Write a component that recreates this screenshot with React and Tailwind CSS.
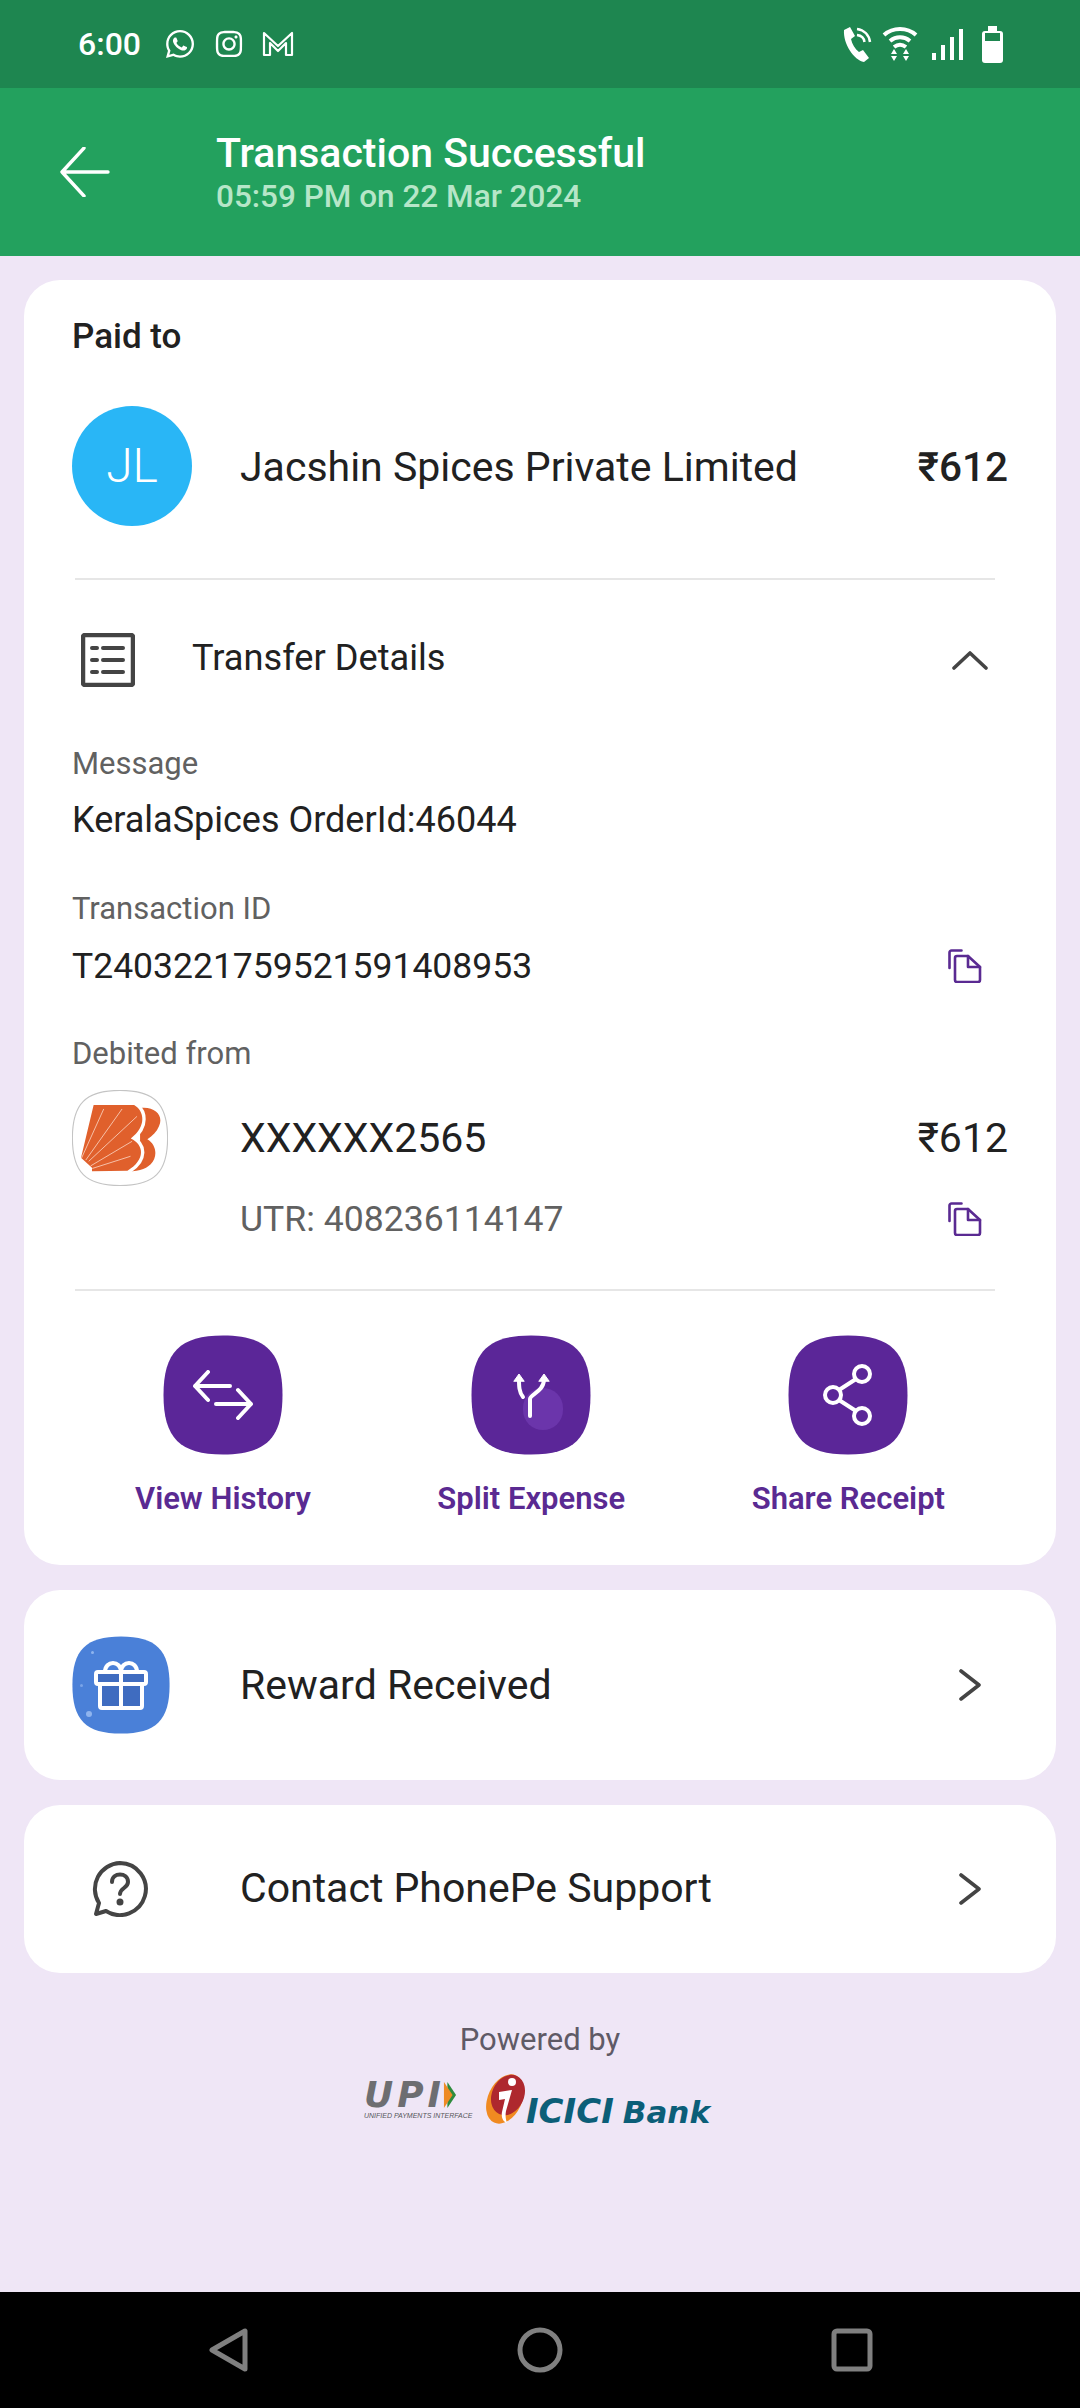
import React from 'react';
import { FaWhatsapp, FaInstagram } from 'react-icons/fa';

const CopyIcon = () => (
  <svg viewBox="0 0 34 34" className="w-[34px] h-[34px]" fill="none" stroke="#5a2a92" strokeWidth="2.6" strokeLinejoin="round" strokeLinecap="round">
    <path d="M13.5 1.5H3.5a2 2 0 0 0-2 2V19" />
    <path d="M7 9a2 2 0 0 1 2-2h11l12 11v13a2 2 0 0 1-2 2H9a2 2 0 0 1-2-2z" />
    <path d="M20 7v11h12" />
  </svg>
);

const ChevronRight = () => (
  <svg viewBox="0 0 24 32" className="w-[24px] h-[32px]" fill="none" stroke="#444" strokeWidth="3.6" strokeLinecap="round" strokeLinejoin="round">
    <path d="M3 2l18 14L3 30" />
  </svg>
);

// tile shape behind the app style icons
const Squircle = ({ className, fill, stroke }) => (
  <svg viewBox="0 0 120 120" className={className}>
    <path d="M60 .5C103 .5 119.500 17 119.500 60S103 119.500 60 119.500 .5 103 .5 60 17 .5 60 .5z" fill={fill} stroke={stroke} strokeWidth="1.4" />
  </svg>
);

const StatusBar = () => (
  <div className="h-[88px] bg-[#1e8650] flex items-center justify-between pl-[78px] pr-[77px] text-white">
    <div className="flex items-center">
      <span className="text-[32px] font-medium leading-none w-[86px]">6:00</span>
      <FaWhatsapp className="w-[32px] h-[32px]" />
      <FaInstagram className="w-[30px] h-[30px] ml-[18px]" />
      <svg viewBox="0 0 32 26" className="w-[32px] h-[26px] ml-[18px]" fill="none" stroke="white" strokeWidth="2.200" strokeLinejoin="round">
        <path d="M2 24V2l14 13L30 2v22h-6V12l-8 8-8-8v12z" />
      </svg>
    </div>
    <div className="flex items-center">
      <svg viewBox="0 0 30 36" className="w-[30px] h-[36px]" fill="white">
        <path d="M2 4l6-3 5 9-4 3c1 5 4 10 8 13l4-2 6 8-5 4C12 34 1 18 2 4z" />
        <path d="M15 3c7 1 12 6 13 13M15 9c4 .5 7 3 7.500 7" fill="none" stroke="white" strokeWidth="2.500" />
      </svg>
      <svg viewBox="0 0 36 36" className="w-[36px] h-[36px] ml-[10px]" fill="none" stroke="white" strokeWidth="4" strokeLinecap="butt">
        <path d="M2 9c9-8 23-8 32 0M8 15c6-5 14-5 20 0M12 21c4-3 8-3 12 0" />
        <path d="M9 28h6l-3-5zM21 28h6l-3-5zM9 30h6l-3 5zM21 30h6l-3 5z" fill="white" stroke="none" />
      </svg>
      <svg viewBox="0 0 32 32" className="w-[32px] h-[32px] ml-[14px]" fill="white">
        <rect x="0" y="25" width="4" height="7" />
        <rect x="9" y="17" width="4" height="15" />
        <rect x="18" y="9" width="4" height="23" />
        <rect x="27" y="1" width="4" height="31" />
      </svg>
      <div className="ml-[18px] w-[21px] h-[32px] mt-[5px] bg-white rounded-[3px] relative">
        <div className="absolute -top-[5px] left-[6px] w-[9px] h-[5px] bg-white" />
        <div className="absolute top-[2px] left-[3px] w-[15px] h-[8px] bg-[#1e8650]" />
      </div>
    </div>
  </div>
);

const Header = () => (
  <div className="h-[168px] bg-[#23a15e] flex items-center pl-[60px]">
    <svg viewBox="0 0 50 50" className="w-[50px] h-[50px]" fill="none" stroke="white" strokeWidth="3.400" strokeLinecap="round" strokeLinejoin="round">
      <path d="M48 25H2M24 1L2 25l22 24" />
    </svg>
    <div className="ml-[106px]">
      <div className="text-[41px] leading-[48px] font-medium text-white pt-[2px]">Transaction Successful</div>
      <div className="text-[31.5px] leading-[40px] font-medium text-[#b6e6c8]">05:59 PM on 22 Mar 2024</div>
    </div>
  </div>
);

const BarodaLogo = () => (
  <div className="w-[96px] h-[96px] relative">
    <Squircle className="w-[96px] h-[96px]" fill="white" stroke="#c4c4c4" />
    <svg viewBox="120 130 245 205" className="absolute left-[8px] top-[14px] w-[82px] h-[68px]">
      <path d="M300 142C345 136 372 165 357 197 350 214 338 226 322 236 350 252 354 290 332 312 316 328 290 334 250 334L250 300 300 240 300 180z" fill="#e0602c" />
      <path d="M160 133H282C312 150 322 196 272 234 312 252 318 298 262 331L155 333 155 322 122 292z" fill="#e0602c" stroke="white" strokeWidth="20" strokeLinejoin="round" paintOrder="stroke" />
      <g stroke="#fde4d6" strokeWidth="2.200" strokeLinecap="round">
        <path d="M124 292L190 146M137 298L245 146M146 302L290 168M152 316L275 243M157 324L270 288" />
      </g>
    </svg>
  </div>
);

const Label = ({ children }) => <div className="h-[40px] text-[31px] leading-[40px] text-[#616161] pt-[1px]">{children}</div>;

const ActionButton = ({ label, children }) => (
  <div className="flex flex-col items-center">
    <div className="w-[120px] h-[120px] flex items-center justify-center relative">
      <Squircle className="absolute inset-0 w-[120px] h-[120px]" fill="#5b2698" />
      {children}
    </div>
    <div className="mt-[24px] text-[31px] leading-[40px] font-semibold text-[#5a2a92] whitespace-nowrap">{label}</div>
  </div>
);

const MainCard = () => (
  <div className="bg-white rounded-[36px] pt-[37px] h-[1285px] text-[#212121]">
    <div className="px-[48px] h-[40px] text-[35px] leading-[40px] font-medium">Paid to</div>
    <div className="mt-[49px] px-[48px] flex items-center h-[120px]">
      <div className="w-[120px] h-[120px] rounded-full bg-[#29b6f6] flex items-center justify-center text-white text-[48px] font-light">JL</div>
      <div className="ml-[48px] flex-1 text-[41px] pt-[3px]">Jacshin Spices Private Limited</div>
      <div className="text-[40.5px] font-medium pt-[3px]">₹612</div>
    </div>
    <div className="mt-[52px] ml-[51px] mr-[61px] h-[2px] bg-[#e6e6e6]" />
    <div className="mt-[38px] h-[80px] flex items-center pl-[57px] pr-[68px]">
      <svg viewBox="0 0 54 54" className="w-[54px] h-[54px] mt-[4px]" fill="none" stroke="#444" strokeWidth="4.500" strokeLinejoin="round">
        <rect x="2" y="2" width="50" height="50" rx="2" />
        <path d="M11 15h5M11 27h5M11 39h5M22 15h20M22 27h20M22 39h20" strokeWidth="4" strokeLinecap="round" />
      </svg>
      <div className="ml-[57px] flex-1 text-[36.2px]">Transfer Details</div>
      <svg viewBox="0 0 36 20" className="w-[36px] h-[20px] mt-[4px]" fill="none" stroke="#444" strokeWidth="3.600" strokeLinecap="round" strokeLinejoin="round">
        <path d="M2 18L18 3l16 15" />
      </svg>
    </div>
    <div className="px-[48px]">
      <div className="mt-[45px]"><Label>Message</Label></div>
      <div className="mt-[17px] h-[40px] text-[36px] leading-[40px]">KeralaSpices OrderId:46044</div>
      <div className="mt-[48px]"><Label>Transaction ID</Label></div>
      <div className="mt-[18px] h-[40px] flex items-center justify-between">
        <span className="text-[35.5px] leading-[40px]">T2403221759521591408953</span>
        <span className="mr-[26px]"><CopyIcon /></span>
      </div>
      <div className="mt-[47px]"><Label>Debited from</Label></div>
      <div className="mt-[17px] flex">
        <div className="w-[168px] shrink-0"><BarodaLogo /></div>
        <div className="flex-1">
          <div className="h-[96px] flex items-center justify-between text-[41px] pt-[1px]">
            <span>XXXXXX2565</span>
            <span>₹612</span>
          </div>
          <div className="mt-[13px] h-[40px] flex items-center justify-between">
            <span className="text-[35.6px] leading-[40px] text-[#616161]">UTR: 408236114147</span>
            <span className="mr-[26px]"><CopyIcon /></span>
          </div>
        </div>
      </div>
    </div>
    <div className="mt-[50px] ml-[51px] mr-[61px] h-[2px] bg-[#e6e6e6]" />
    <div className="mt-[44px] px-[111px] flex justify-between">
      <ActionButton label="View History">
        <svg viewBox="0 0 62 50" className="w-[62px] h-[50px] relative" fill="none" stroke="white" strokeWidth="4" strokeLinecap="round" strokeLinejoin="round">
          <path d="M38 16H3M16 2L3 16l13 14" />
          <path d="M24 34h35M46 20l13 14-13 14" />
        </svg>
      </ActionButton>
      <ActionButton label="Split Expense">
        <div className="absolute left-[52px] top-[53px] w-[40px] h-[42px] rounded-full bg-[#6b35ab]" />
        <svg viewBox="0 0 40 46" className="w-[40px] h-[46px] relative" fill="none" stroke="white" strokeWidth="4" strokeLinecap="round" strokeLinejoin="round">
          <path d="M19 44V27c0-5 14-7 14-20" />
          <path d="M12 25C8 20 8 14 8 7" />
          <path d="M3 9l5-7 5 7zM28 9l5-7 5 7z" fill="white" strokeWidth="1" />
        </svg>
      </ActionButton>
      <ActionButton label="Share Receipt">
        <svg viewBox="0 0 50 62" className="w-[50px] h-[62px] relative" fill="none" stroke="white" strokeWidth="4">
          <circle cx="39" cy="10" r="8" />
          <circle cx="10" cy="31" r="8" />
          <circle cx="39" cy="52" r="8" />
          <path d="M33 15L16 26M16 36l17 11" />
        </svg>
      </ActionButton>
    </div>
  </div>
);

const RewardCard = () => (
  <div className="mt-[25px] h-[190px] bg-white rounded-[36px] flex items-center pl-[48px] pr-[74px]">
    <div className="w-[98px] h-[98px] flex items-center justify-center relative">
      <Squircle className="absolute inset-0 w-[98px] h-[98px]" fill="#4a80d8" />
      <div className="absolute left-[19px] top-[15px] w-[3px] h-[3px] rounded-full bg-[#8fb4ee]" />
      <div className="absolute left-[8px] top-[48px] w-[3px] h-[3px] rounded-full bg-[#7aa4e8]" />
      <div className="absolute left-[14px] top-[75px] w-[6px] h-[6px] rounded-full bg-[#8fb4ee]" />
      <svg viewBox="0 0 54 50" className="w-[54px] h-[50px] relative" fill="none" stroke="white" strokeWidth="4" strokeLinejoin="round">
        <path d="M6 24h42v22a2 2 0 0 1-2 2H8a2 2 0 0 1-2-2z" fill="#3f6cc0" />
        <rect x="2" y="12" width="50" height="12" rx="2" fill="#3f6cc0" />
        <path d="M27 12v36" />
        <path d="M11 12c0-12 16-12 16 0M27 12c0-12 16-12 16 0" />
      </svg>
    </div>
    <div className="ml-[70px] flex-1 text-[41px] text-[#212121] pt-[1px]">Reward Received</div>
    <ChevronRight />
  </div>
);

const SupportCard = () => (
  <div className="mt-[25px] h-[168px] bg-white rounded-[36px] flex items-center pl-[68px] pr-[74px]">
    <svg viewBox="0 0 56 56" className="w-[56px] h-[56px]" fill="none" stroke="#444" strokeWidth="4" strokeLinecap="round" strokeLinejoin="round">
      <path d="M28 2a26 26 0 1 1-14 48L4 53l3-11A26 26 0 0 1 28 2z" />
      <path d="M20 21c0-10 16-10 16 0 0 6-8 6-8 12" />
      <circle cx="28" cy="41" r="1.500" fill="#444" />
    </svg>
    <div className="ml-[92px] flex-1 text-[41px] text-[#212121]">Contact PhonePe Support</div>
    <ChevronRight />
  </div>
);

const Footer = () => (
  <div className="mt-[47px] flex flex-col items-center">
    <div className="h-[40px] text-[31px] leading-[40px] text-[#5f5a66]">Powered by</div>
    <div className="mt-[13px] h-[52px] flex items-end ml-[-6px]">
      <div className="flex flex-col items-start w-[106px] mb-[3px]">
        <div className="flex items-center h-[26px]">
          <span className="font-['DejaVu_Sans',sans-serif] italic font-bold text-[36px] leading-[26px] text-[#6d6e71] tracking-[4px]">UPI</span>
          <svg viewBox="0 0 14 30" className="w-[14px] h-[26px] ml-[-2px]">
            <path d="M4 0l10 15L4 30z" fill="#2e8b3d" />
            <path d="M0 0l10 15L0 30z" fill="#ee8a25" />
          </svg>
        </div>
        <div className="mt-[2px] font-['Liberation_Sans',sans-serif] italic text-[7px] leading-[12px] text-[#55565a] whitespace-nowrap">UNIFIED PAYMENTS INTERFACE</div>
      </div>
      <svg viewBox="0 0 46 50" className="w-[46px] h-[50px] ml-[12px] mb-[1px]">
        <ellipse cx="23" cy="25" rx="17" ry="26" transform="rotate(25 23 25)" fill="#f08a21" />
        <ellipse cx="26" cy="21" rx="16" ry="21" transform="rotate(25 26 21)" fill="#ae282e" />
        <circle cx="30" cy="8" r="4" fill="white" />
        <path d="M17 18l13-2-6 21c-1 5 0 9 1 12-4-1-6-6-5-11l3-13-6 1z" fill="white" />
      </svg>
      <div className="font-['DejaVu_Sans',sans-serif] italic font-bold text-[#0b5e78] mb-[-4px] ml-[-2px] whitespace-nowrap flex items-baseline">
        <span className="text-[34px] leading-[34px]">ICICI</span><span className="text-[31px] leading-[34px] ml-[9px]">Bank</span>
      </div>
    </div>
  </div>
);

const NavBar = () => (
  <div className="absolute bottom-0 left-0 right-0 h-[116px] bg-black flex items-center justify-between pl-[208px] pr-[207px]">
    <svg viewBox="0 0 40 44" className="w-[40px] h-[44px]" fill="none" stroke="#808080" strokeWidth="5" strokeLinejoin="round">
      <path d="M37 3v38L4 22z" />
    </svg>
    <svg viewBox="0 0 46 46" className="w-[46px] h-[46px]" fill="none" stroke="#808080" strokeWidth="5">
      <circle cx="23" cy="23" r="20" />
    </svg>
    <svg viewBox="0 0 42 44" className="w-[42px] h-[44px]" fill="none" stroke="#808080" strokeWidth="5" strokeLinejoin="round">
      <rect x="3" y="3" width="36" height="38" rx="3" />
    </svg>
  </div>
);

export default function App() {
  return (
    <div className="relative w-[1080px] h-[2408px] bg-[#efe6f6] font-['Roboto',sans-serif] overflow-hidden">
      <StatusBar />
      <Header />
      <div className="px-[24px] pt-[24px]">
        <MainCard />
        <RewardCard />
        <SupportCard />
        <Footer />
      </div>
      <NavBar />
    </div>
  );
}
